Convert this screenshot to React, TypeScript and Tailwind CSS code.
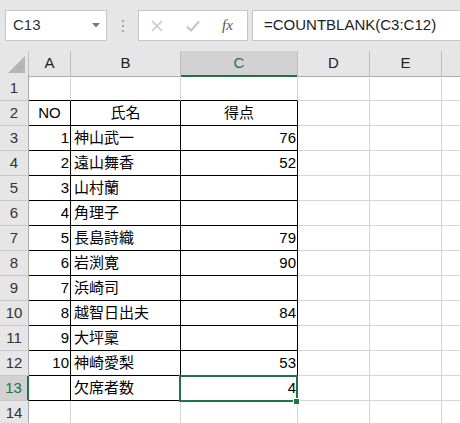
import React from "react";

const FONT = { fontFamily: '"Liberation Sans", "Noto Sans CJK JP", sans-serif' };

type Row = { no: string; name: string; score: string; head?: boolean };

// rows 2..13 of the sheet
const tableRows: Row[] = [
  { no: "NO", name: "氏名", score: "得点", head: true },
  { no: "1", name: "神山武一", score: "76" },
  { no: "2", name: "遠山舞香", score: "52" },
  { no: "3", name: "山村蘭", score: "" },
  { no: "4", name: "角理子", score: "" },
  { no: "5", name: "長島詩織", score: "79" },
  { no: "6", name: "岩渕寛", score: "90" },
  { no: "7", name: "浜崎司", score: "" },
  { no: "8", name: "越智日出夫", score: "84" },
  { no: "9", name: "大坪稟", score: "" },
  { no: "10", name: "神崎愛梨", score: "53" },
  { no: "", name: "欠席者数", score: "4" },
];

const Toolbar = () => (
  <div className="flex h-[51px] items-start bg-[#e6e6e6] pl-[5px] pt-[10px]">
    {/* name box */}
    <div className="flex h-[31px] w-[102px] items-center justify-between border border-[#c6c6c6] bg-white pl-[7px] pr-[6px]">
      <span className="text-[15px] text-[#333]">C13</span>
      <svg width="8" height="5" viewBox="0 0 8 5">
        <polygon points="0,0 8,0 4,4.5" fill="#7a7a7a" />
      </svg>
    </div>

    {/* grip dots */}
    <div className="flex h-[31px] w-[31px] flex-col items-center justify-center gap-[3px]">
      <span className="h-[2px] w-[2px] bg-[#a8a8a8]" />
      <span className="h-[2px] w-[2px] bg-[#a8a8a8]" />
      <span className="h-[2px] w-[2px] bg-[#a8a8a8]" />
    </div>

    {/* cancel / enter / fx */}
    <div className="flex h-[31px] w-[110px] items-center border border-[#c6c6c6] bg-white pl-[12px]">
      <svg width="12" height="12" viewBox="0 0 12 12">
        <path d="M1 1 L11 11 M11 1 L1 11" stroke="#c4c4c4" strokeWidth="1.4" fill="none" />
      </svg>
      <svg width="14" height="12" viewBox="0 0 14 12" className="ml-[23px]">
        <path d="M1 6.5 L5 10.5 L13 1.5" stroke="#c4c4c4" strokeWidth="2" fill="none" />
      </svg>
      <span
        className="ml-[22px] text-[15px] italic text-[#555]"
        style={{ fontFamily: '"Liberation Serif", serif' }}
      >
        fx
      </span>
    </div>

    {/* formula */}
    <div className="ml-[4px] flex h-[31px] flex-1 items-center border border-r-0 border-[#c6c6c6] bg-white pl-[11px]">
      <span className="text-[15px] text-[#222]">=COUNTBLANK(C3:C12)</span>
    </div>
  </div>
);

const ColumnHeader = () => (
  <div className="grid h-[25px] grid-cols-[29px_42px_110px_117px_72px_72px_1fr] bg-[#e6e6e6]">
    <div className="flex items-end justify-end border-r border-b border-r-[#bdbdbd] border-b-[#ababab] pb-[3px] pr-[3px]">
      <svg width="17" height="17" viewBox="0 0 17 17">
        <polygon points="0,17 17,17 17,0" fill="#b5b5b5" />
      </svg>
    </div>
    <div className="flex items-center justify-center border-r border-b border-r-[#bdbdbd] border-b-[#ababab] text-[15px] text-[#222]">A</div>
    <div className="flex items-center justify-center border-r border-b border-r-[#bdbdbd] border-b-[#ababab] text-[15px] text-[#222]">B</div>
    <div className="flex items-center justify-center border-r border-b-2 border-r-[#bdbdbd] border-b-[#217346] bg-[#d2d2d2] pt-[1px] text-[15px] text-[#217346]">C</div>
    <div className="flex items-center justify-center border-r border-b border-r-[#bdbdbd] border-b-[#ababab] text-[15px] text-[#222]">D</div>
    <div className="flex items-center justify-center border-r border-b border-r-[#bdbdbd] border-b-[#ababab] text-[15px] text-[#222]">E</div>
    <div className="border-b border-b-[#ababab]" />
  </div>
);

const RowHead = ({ n, active }: { n: number; active?: boolean }) =>
  active ? (
    <div className="flex items-center justify-center border-r-2 border-b border-r-[#217346] border-b-[#c8c8c8] bg-[#d2d2d2] text-[15px] text-[#217346]">
      {n}
    </div>
  ) : (
    <div className="flex items-center justify-center border-r border-b border-r-[#a8a8a8] border-b-[#c8c8c8] bg-[#e6e6e6] text-[15px] text-[#333]">
      {n}
    </div>
  );

const EmptyRow = ({ n, topOfTable }: { n: number; topOfTable?: boolean }) => (
  <div className="grid h-[25px] grid-cols-[29px_42px_110px_117px_72px_72px_1fr]">
    <RowHead n={n} />
    <div className={topOfTable ? "border-r border-b border-r-[#d4d4d4] border-b-black" : "border-r border-b border-[#d4d4d4]"} />
    <div className={topOfTable ? "border-r border-b border-r-[#d4d4d4] border-b-black" : "border-r border-b border-[#d4d4d4]"} />
    <div className={topOfTable ? "border-r border-b border-r-[#d4d4d4] border-b-black" : "border-r border-b border-[#d4d4d4]"} />
    <div className="border-r border-b border-[#d4d4d4]" />
    <div className="border-r border-b border-[#d4d4d4]" />
    <div className="border-b border-[#d4d4d4]" />
  </div>
);

const TableRow = ({ n, row, active }: { n: number; row: Row; active?: boolean }) => (
  <div className="grid h-[25px] grid-cols-[29px_42px_110px_117px_72px_72px_1fr] text-[15px] text-black">
    <RowHead n={n} active={active} />
    <div
      className={
        row.head
          ? "flex items-center justify-center border-r border-b border-black"
          : "flex items-center justify-end border-r border-b border-black pr-[1px]"
      }
    >
      {row.no}
    </div>
    <div
      className={
        row.head
          ? "flex items-center justify-center border-r border-b border-black"
          : "flex items-center border-r border-b border-black pl-[3px]"
      }
    >
      {row.name}
    </div>
    <div
      className={
        row.head
          ? "flex items-center justify-center border-r border-b border-black"
          : "relative flex items-center justify-end border-r border-b border-black pr-[1px]"
      }
    >
      {row.score}
      {active && (
        <>
          <div className="absolute -top-[1px] -left-[2px] -right-[1px] -bottom-[2px] border-2 border-[#217346]" />
          <div className="absolute -right-[3px] -bottom-[5px] h-[7px] w-[7px] border border-white bg-[#217346]" />
        </>
      )}
    </div>
    <div className="border-r border-b border-[#d4d4d4]" />
    <div className="border-r border-b border-[#d4d4d4]" />
    <div className="border-b border-[#d4d4d4]" />
  </div>
);

export default function App() {
  return (
    <div className="h-[423px] w-[460px] overflow-hidden bg-white" style={FONT}>
      <Toolbar />
      <ColumnHeader />
      <EmptyRow n={1} topOfTable />
      {tableRows.map((row, i) => (
        <TableRow key={i} n={i + 2} row={row} active={i === tableRows.length - 1} />
      ))}
      <EmptyRow n={14} />
    </div>
  );
}
